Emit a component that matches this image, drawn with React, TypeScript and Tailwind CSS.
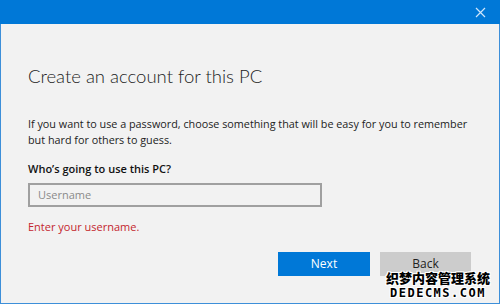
export default function App() {
  return (
    <div className="relative flex h-[304px] w-[500px] flex-col overflow-hidden bg-[#f2f2f2] font-['Open_Sans',sans-serif]">
      <div className="flex h-[24px] shrink-0 items-center justify-end bg-[#0078d7] pr-[14px]">
        <svg width="11" height="11" viewBox="0 0 11 11">
          <path d="M1 1L10 10M10 1L1 10" stroke="#cfe6fb" strokeWidth="1.2" />
        </svg>
      </div>
      <div className="flex flex-1 flex-col border-x border-b border-[#3d8fd9] px-[27px]">
        <h1 className="mt-[40px] font-['Lato',sans-serif] text-[18.5px] font-light leading-[24px] text-[#222]">
          Create an account for this PC
        </h1>
        <p className="mt-[28px] whitespace-nowrap text-[10.8px] leading-[16px] text-[#222]">
          If you want to use a password, choose something that will be easy for you to remember
          <br />
          but hard for others to guess.
        </p>
        <div className="mt-[13px] text-[11px] font-semibold leading-[16px] text-[#111]">
          Who’s going to use this PC?
        </div>
        <div className="mt-[6px] flex h-[24px] w-[294px] items-center border-2 border-[#a0a0a0] bg-[#f2f2f2] px-[8px] text-[11px] text-[#8a8a8a]">
          Username
        </div>
        <div className="mt-[12px] text-[11px] leading-[16px] text-[#c4262e]">Enter your username.</div>
        <div className="mt-[17px] flex justify-end gap-[10px] pr-[1px]">
          <div className="flex h-[24px] w-[92px] items-center justify-center bg-[#0078d7] text-[12px] text-white">
            Next
          </div>
          <div className="flex h-[24px] w-[91px] items-center justify-center bg-[#cccccc] text-[12px] text-[#222]">
            Back
          </div>
        </div>
      </div>
      <div className="absolute right-[10px] bottom-[5px] flex flex-col items-center leading-none">
        <div className="font-['Noto_Sans_CJK_SC',sans-serif] text-[13px] font-black text-black [text-shadow:1px_1px_0_#fff,-1px_-1px_0_#fff,1px_-1px_0_#fff,-1px_1px_0_#fff]">
          织梦内容管理系统
        </div>
        <div className="mt-[3px] font-['DejaVu_Sans_Mono',monospace] text-[12px] font-bold tracking-[1.5px] text-black [text-shadow:1px_1px_0_#fff,-1px_-1px_0_#fff,1px_-1px_0_#fff,-1px_1px_0_#fff]">
          DEDECMS.COM
        </div>
      </div>
    </div>
  );
}
